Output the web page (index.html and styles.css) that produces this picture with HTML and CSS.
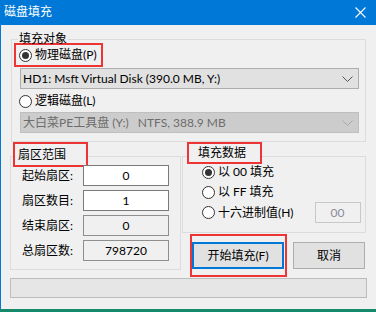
FILE: index.html
```html
<!DOCTYPE html>
<html>
<head>
<meta charset="utf-8">
<link rel="stylesheet" href="styles.css">
</head>
<body>
<div class="window">
  <div class="titlebar">
    <span class="title">磁盘填充</span>
    <svg class="close" width="11" height="11" viewBox="0 0 11 11"><path d="M0.5 0.5 L10.5 10.5 M10.5 0.5 L0.5 10.5" stroke="#fff" stroke-width="1.1"/></svg>
  </div>
  <div class="content">
    <div class="group g1">
      <div class="legend">填充对象</div>
      <div class="redbox rb-radio">
        <span class="radio checked"></span><span class="rlabel">物理磁盘(P)</span>
      </div>
      <div class="combo">
        <span>HD1: Msft Virtual Disk (390.0 MB, Y:)</span>
        <svg class="chev" width="11" height="6" viewBox="0 0 11 6"><path d="M0.5 0.5 L5.5 5.5 L10.5 0.5" fill="none" stroke="#555" stroke-width="1"/></svg>
      </div>
      <div class="radiorow r2">
        <span class="radio"></span><span class="rlabel">逻辑磁盘(L)</span>
      </div>
      <div class="combo disabled">
        <span>大白菜PE工具盘 (Y:)&nbsp;&nbsp;&nbsp;NTFS, 388.9 MB</span>
        <svg class="chev" width="11" height="6" viewBox="0 0 11 6"><path d="M0.5 0.5 L5.5 5.5 L10.5 0.5" fill="none" stroke="#a8a8a8" stroke-width="1"/></svg>
      </div>
    </div>
    <div class="middle">
      <div class="group g2">
        <div class="legend redbox lg2">扇区范围</div>
        <div class="frow"><span class="flabel">起始扇区:</span><span class="field">0</span></div>
        <div class="frow"><span class="flabel">扇区数目:</span><span class="field">1</span></div>
        <div class="frow"><span class="flabel">结束扇区:</span><span class="field ro">0</span></div>
        <div class="frow"><span class="flabel">总扇区数:</span><span class="field ro">798720</span></div>
      </div>
      <div class="rightcol">
        <div class="group g3">
          <div class="legend redbox lg3">填充数据</div>
          <div class="radiorow r3"><span class="radio checked"></span><span class="rlabel">以 00 填充</span></div>
          <div class="radiorow r3"><span class="radio"></span><span class="rlabel">以 FF 填充</span></div>
          <div class="radiorow r3 hexrow"><span class="radio"></span><span class="rlabel">十六进制值(H)</span><span class="hex">00</span></div>
        </div>
        <div class="buttons">
          <div class="redbox rb-btn"><div class="btn primary">开始填充(F)</div></div>
          <div class="btn cancel">取消</div>
        </div>
      </div>
    </div>
    <div class="progress"></div>
  </div>
</div>
<div class="taskbar"></div>
</body>
</html>
```
FILE: styles.css
```css
* { box-sizing: border-box; }
html, body { margin: 0; padding: 0; }
body {
  width: 376px;
  height: 312px;
  overflow: hidden;
  font-family: "Lato", "Noto Sans CJK SC", sans-serif;
  font-size: 12px;
  color: #000;
  background: #f0f0f0;
}
.window {
  height: 309px;
  background: #f0f0f0;
  border-left: 1px solid #0078d7;
}
.taskbar { height: 3px; background: #138a6c; }
.titlebar {
  height: 25px;
  background: #0078d7;
  display: flex;
  align-items: center;
  justify-content: space-between;
  padding: 0 10px 0 3px;
}
.title { color: #fff; font-size: 12px; line-height: 14px; margin-top: -1px; }
.close { display: block; margin-top: -1px; }
.content { padding: 0 0 0 9px; }
.group {
  border: 1px solid #dcdcdc;
}
.legend {
  width: fit-content;
  background: #f0f0f0;
  line-height: 14px;
}
.g1 {
  margin: 14px 0 0 1px;
  width: 355px;
  padding: 0 0 8px 0;
}
.g1 .legend { margin: -8px 0 0 6px; padding: 0 1px; }
.redbox { border: 2px solid #ee3535; }
.rb-radio {
  display: flex;
  align-items: center;
  width: 89px;
  height: 24px;
  margin: -3px 0 0 2px;
  padding-left: 3px;
}
.radio {
  width: 13px;
  height: 13px;
  border: 1px solid #333;
  border-radius: 50%;
  background: #fff;
  display: flex;
  align-items: center;
  justify-content: center;
  flex: none;
}
.radio.checked::after {
  content: "";
  width: 7px;
  height: 7px;
  border-radius: 50%;
  background: #333;
}
.rlabel { margin-left: 3px; line-height: 14px; white-space: nowrap; }
.combo {
  margin: 1px 0 0 8px;
  width: 339px;
  height: 21px;
  background: #e1e1e1;
  border: 1px solid #adadad;
  display: flex;
  align-items: center;
  justify-content: space-between;
  padding: 0 5px 0 2px;
  line-height: 14px;
  white-space: nowrap;
}
.combo.disabled { background: #cccccc; border-color: #bfbfbf; color: #6d6d6d; }
.radiorow { display: flex; align-items: center; }
.r2 { height: 20px; margin-top: 2px; padding-left: 7px; margin-bottom: 1px; }
.middle {
  display: flex;
  align-items: flex-start;
  margin-top: 14px;
}
.g2 {
  width: 171px;
  height: 114px;
  padding: 0 0 0 11px;
}
.lg2 {
  margin: -15px 0 0 -9px;
  height: 25px;
  width: 75px;
  padding-left: 3px;
  display: flex;
  align-items: center;
}
.frow {
  display: flex;
  align-items: center;
  height: 21px;
  margin-top: 4px;
}
.g2 .lg2 + .frow { margin-top: -2px; }
.flabel { width: 61px; line-height: 14px; }
.field {
  width: 86px;
  height: 21px;
  background: #fff;
  border: 1px solid #7a7a7a;
  display: flex;
  align-items: center;
  justify-content: center;
  line-height: 14px;
}
.field.ro { background: #f0f0f0; border-color: #8f8f8f; }
.rightcol { margin-left: 1px; width: 184px; }
.g3 {
  height: 77px;
  padding-left: 19px;
}
.lg3 {
  margin: -15px 0 0 -15px;
  height: 22px;
  width: 75px;
  padding-left: 9px;
  display: flex;
  align-items: center;
}
.r3 { height: 20px; }
.lg3 + .r3 { margin-top: -2px; }
.hexrow { height: 21px; }
.hex {
  margin-left: 21px;
  width: 46px;
  height: 21px;
  border: 1px solid #c8c8c8;
  background: #f0f0f0;
  color: #8a8a9a;
  display: flex;
  align-items: center;
  justify-content: center;
}
.buttons { display: flex; align-items: flex-start; margin-top: 1px; }
.rb-btn {
  margin-left: 8px;
  width: 97px;
  height: 43px;
  padding: 6px 0 0 0;
}
.btn {
  height: 27px;
  background: #e1e1e1;
  border: 1px solid #adadad;
  display: flex;
  align-items: center;
  justify-content: center;
  line-height: 14px;
}
.btn.primary { width: 92px; border: 2px solid #0078d7; }
.cancel { width: 72px; margin: 8px 0 0 6px; }
.progress {
  margin-top: 1px;
  width: 357px;
  height: 20px;
  background: #e6e6e6;
  border: 1px solid #bcbcbc;
}
```
